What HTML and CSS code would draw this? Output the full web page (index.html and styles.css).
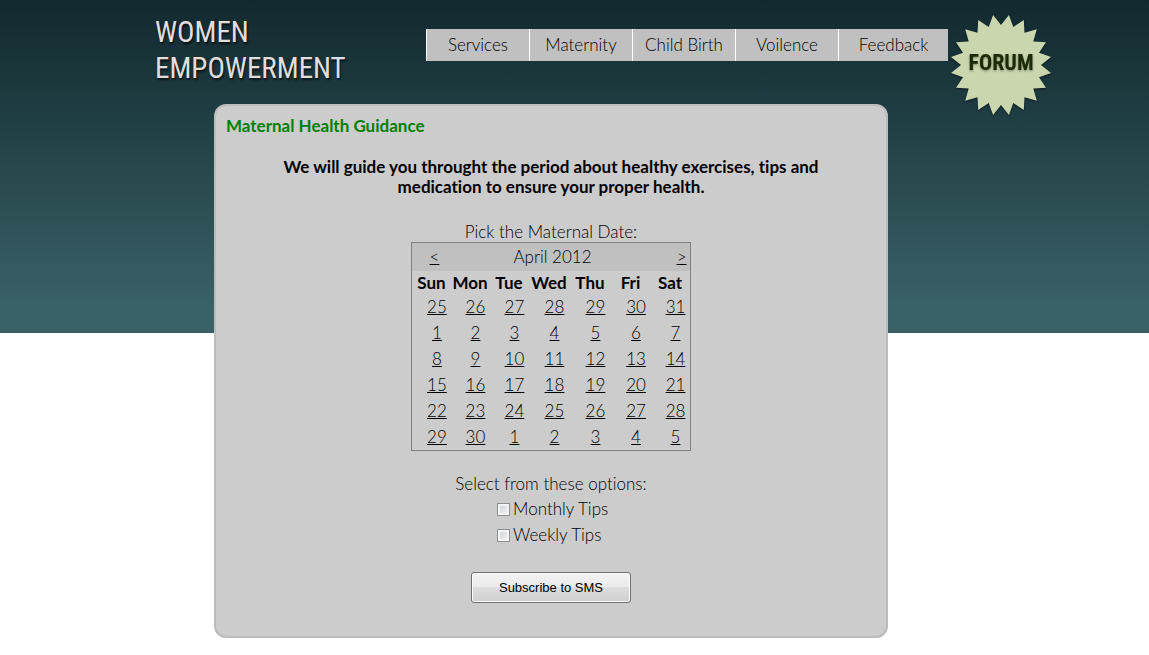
FILE: index.html
```html
<!DOCTYPE html>
<html lang="en">
<head>
<meta charset="utf-8">
<title>Women Empowerment - Maternal Health Guidance</title>
<link rel="stylesheet" href="styles.css">
</head>
<body>
<div class="page">
  <header class="header">
    <a class="logo" href="#">WOMEN<br>EMPOWERMENT</a>
    <nav class="nav">
      <a href="#">Services</a>
      <a href="#">Maternity</a>
      <a href="#">Child Birth</a>
      <a href="#">Voilence</a>
      <a href="#">Feedback</a>
    </nav>
    <a class="forum" href="#">
      <svg viewBox="-52 -52 104 104" aria-label="Forum">
        <path class="burst" d="M0-40L7.9-50 12.3-38 22.8-45 23.5-32.3 35.8-35.8 32.3-23.5 45-22.8 38-12.3 50-7.9 40 0 50 7.9 38 12.3 45 22.8 32.3 23.5 35.8 35.8 23.5 32.3 22.8 45 12.3 38 7.9 50 0 40-7.9 50-12.3 38-22.8 45-23.5 32.3-35.8 35.8-32.3 23.5-45 22.8-38 12.3-50 7.9-40 0-50-7.9-38-12.3-45-22.8-32.3-23.5-35.8-35.8-23.5-32.3-22.8-45-12.3-38-7.9-50Z"/>
        <text x="0" y="5" text-anchor="middle">FORUM</text>
      </svg>
    </a>
  </header>
  <main class="panel">
    <h1>Maternal Health Guidance</h1>
    <form class="form">
      <p class="intro">We will guide you throught the period about healthy exercises, tips and medication to ensure your proper health.</p>
      <table class="calendar">
        <caption>Pick the Maternal Date:</caption>
        <colgroup><col class="c38"><col class="c39"><col class="c39"><col class="c41"><col class="c41"><col class="c40"><col class="c39"></colgroup>
        <thead>
          <tr class="month"><td><a href="#">&lt;</a></td><td class="title" colspan="5">April 2012</td><td class="next"><a href="#">&gt;</a></td></tr>
          <tr><th>Sun</th><th>Mon</th><th>Tue</th><th>Wed</th><th>Thu</th><th>Fri</th><th>Sat</th></tr>
        </thead>
        <tbody>
          <tr><td><a href="#">25</a></td><td><a href="#">26</a></td><td><a href="#">27</a></td><td><a href="#">28</a></td><td><a href="#">29</a></td><td><a href="#">30</a></td><td><a href="#">31</a></td></tr>
          <tr><td><a href="#">1</a></td><td><a href="#">2</a></td><td><a href="#">3</a></td><td><a href="#">4</a></td><td><a href="#">5</a></td><td><a href="#">6</a></td><td><a href="#">7</a></td></tr>
          <tr><td><a href="#">8</a></td><td><a href="#">9</a></td><td><a href="#">10</a></td><td><a href="#">11</a></td><td><a href="#">12</a></td><td><a href="#">13</a></td><td><a href="#">14</a></td></tr>
          <tr><td><a href="#">15</a></td><td><a href="#">16</a></td><td><a href="#">17</a></td><td><a href="#">18</a></td><td><a href="#">19</a></td><td><a href="#">20</a></td><td><a href="#">21</a></td></tr>
          <tr><td><a href="#">22</a></td><td><a href="#">23</a></td><td><a href="#">24</a></td><td><a href="#">25</a></td><td><a href="#">26</a></td><td><a href="#">27</a></td><td><a href="#">28</a></td></tr>
          <tr><td><a href="#">29</a></td><td><a href="#">30</a></td><td><a href="#">1</a></td><td><a href="#">2</a></td><td><a href="#">3</a></td><td><a href="#">4</a></td><td><a href="#">5</a></td></tr>
        </tbody>
      </table>
      <fieldset class="options">
        <legend>Select from these options:</legend>
        <div class="choices">
          <label><input type="checkbox" name="monthly">Monthly Tips</label>
          <label><input type="checkbox" name="weekly">Weekly Tips</label>
        </div>
      </fieldset>
      <button class="subscribe" type="button">Subscribe to SMS</button>
    </form>
  </main>
</div>
</body>
</html>
```
FILE: styles.css
```css
* { box-sizing: border-box; }
body {
  margin: 0;
  background: #fff linear-gradient(#12292f, #1d3b40 30%, #3a6166 92%, #3a6166) no-repeat 0 0 / 100% 333px;
  color: #000;
  font: 300 17px/20px "Century Gothic", Lato, sans-serif;
  font-variant-ligatures: none;
}
a { color: inherit; }
.page { max-width: 961px; margin: 0 auto; }
.header {
  display: flex;
  align-items: flex-start;
  height: 104px;
  padding-left: 61px;
}
.logo {
  flex: 0 0 271px;
  padding-top: 14px;
  color: #e2dede;
  font: 29px/36px "Roboto Condensed", "Liberation Sans Narrow", sans-serif;
  text-decoration: none;
  text-shadow: 1px 2px 2px #000a;
}
.nav { display: flex; margin-top: 29px; background: #c0c0c0; }
.nav a {
  width: 103px;
  border-left: 1px solid #fff;
  line-height: 32px;
  text-align: center;
  text-decoration: none;
}
.nav a:last-child { width: 110px; }
.forum { width: 104px; margin: 13px 0 0 1px; }
.forum svg { display: block; width: 104px; height: 104px; }
.burst { fill: #c9d6ae; filter: drop-shadow(0 1px 1px #0008); }
.forum text {
  fill: #1c2b06;
  font: bold 22px "Roboto Condensed", "Liberation Sans Narrow", sans-serif;
  filter: drop-shadow(0 1px 1px #0006);
}
.panel {
  max-width: 674px;
  margin: 0 auto 17px 120px;
  padding: 10px 10px 33px;
  border: 2px solid #bbb;
  border-radius: 12px;
  background: #ccc;
}
h1 { margin: 0 0 21px; color: #008000; font-size: 17px; line-height: 20px; }
.form { display: flex; flex-direction: column; align-items: center; }
.intro { max-width: 560px; margin: 0 0 24px; font-weight: bold; text-align: center; }
.calendar {
  width: 279px;
  border: 1px solid #808080;
  border-spacing: 0;
  table-layout: fixed;
}
.c38 { width: 38px; }
.c39 { width: 39px; }
.c40 { width: 40px; }
.c41 { width: 41px; }
.calendar caption { line-height: 21px; }
.calendar th { height: 23px; padding: 0; text-align: center; }
.calendar td { height: 26px; padding: 0 0 0 11px; text-align: center; }
.calendar .month td { height: 28px; padding-left: 6px; background: #c0c0c0; }
.calendar .month .title { padding-left: 4px; }
.calendar .month .next { padding-right: 3px; text-align: right; }
.options { margin: 23px 0 24px; padding: 0; border: 0; }
.options legend { padding: 0; }
.choices { display: flex; flex-direction: column; width: 108px; margin: 2px auto 0; }
.choices label { display: flex; align-items: center; gap: 3px; line-height: 26px; white-space: nowrap; }
.choices input {
  appearance: none;
  flex: none;
  width: 13px;
  height: 13px;
  margin: 0;
  border: 1px solid #8e8f8f;
  background: linear-gradient(135deg, #cbcfd5, #f6f6f6);
  box-shadow: inset 0 0 0 2px #f4f4f4;
}
.choices input:checked { background: #345; }
.subscribe {
  width: 160px;
  height: 31px;
  padding: 0;
  border: 1px solid #707070;
  border-radius: 3px;
  background: linear-gradient(#f2f2f2, #ebebeb 50%, #dddddd 50%, #cfcfcf);
  box-shadow: inset 0 0 0 1px #fcfcfc;
  color: #000;
  font: 13px "Liberation Sans", Arial, sans-serif;
}
```
